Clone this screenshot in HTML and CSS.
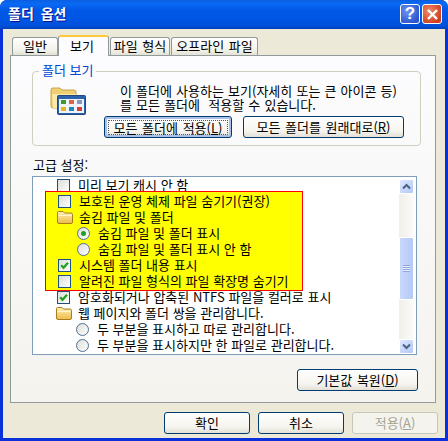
FILE: index.html
```html
<!DOCTYPE html>
<html lang="ko">
<head>
  <meta charset="UTF-8">
  <title>폴더 옵션</title>
  <link rel="stylesheet" href="styles.css">
</head>
<body>
  <svg class="sprites" width="0" height="0">
    <defs>
      <linearGradient id="folder-fill" x1="0" y1="0" x2="0" y2="1">
        <stop offset="0" stop-color="#fdf0b8"/>
        <stop offset="1" stop-color="#eebb48"/>
      </linearGradient>
    </defs>
    <symbol id="folder" viewBox="0 0 16 14">
      <path d="M.5 12V2.500q0-1 1-1h4.500l1.500 1.500h6.500q1.500 0 1.500 1.500V12q0 1.500-1.500 1.500H2q-1.500 0-1.500-1.500z" fill="url(#folder-fill)" stroke="#a87b1c"/>
      <path d="M1.500 5.500h13" stroke="#fff6d2"/>
    </symbol>
    <symbol id="check" viewBox="0 0 13 13">
      <path d="M3.200 6.200l2.300 2.500 4.500-4.900" fill="none" stroke="#21a121" stroke-width="2.300"/>
    </symbol>
  </svg>

  <div class="window">
    <div class="titlebar">
      <span class="title">폴더 옵션</span>
      <span class="caption-btn help">?</span>
      <span class="caption-btn close">
        <svg width="13" height="13" viewBox="0 0 13 13"><path d="M2 2l9 9M11 2l-9 9" stroke="#fff" stroke-width="2.400"/></svg>
      </span>
    </div>

    <div class="body">
      <div class="tabs">
        <div class="tab tab-first">일반</div>
        <div class="tab active">보기</div>
        <div class="tab tab-types">파일 형식</div>
        <div class="tab tab-offline">오프라인 파일</div>
      </div>

      <div class="panel">
        <fieldset class="group">
          <legend>폴더 보기</legend>
          <div class="group-inner">
            <svg class="big-icon" width="36" height="30" viewBox="0 0 36 30">
              <path d="M1 21V5q0-2 2-2h7l2 2h12q2 0 2 2v16H3q-2 0-2-2z" fill="#f0cf72" stroke="#c8a447"/>
              <path d="M3 23L2 9h24l1 14z" fill="#fbe9a8"/>
              <rect x="7.500" y="10.500" width="28" height="19" rx="1" fill="#2a62ae" stroke="#23487f"/>
              <rect x="9" y="14" width="25" height="14" fill="#eef3fb"/>
              <rect x="11" y="15" width="5" height="4" fill="#3f9a2c"/>
              <rect x="19" y="15" width="5" height="4" fill="#d9683f"/>
              <rect x="27" y="15" width="5" height="4" fill="#8a97c2"/>
              <rect x="11" y="22" width="5" height="4" fill="#e8b420"/>
              <rect x="19" y="22" width="5" height="4" fill="#1f88b8"/>
              <rect x="27" y="22" width="5" height="4" fill="#d9402f"/>
            </svg>
            <div class="group-main">
              <p class="group-text">이 폴더에 사용하는 보기(자세히 또는 큰 아이콘 등)<br>를 모든 폴더에 &nbsp;적용할 수 있습니다.</p>
              <div class="group-buttons">
                <button class="btn btn-focus btn-apply-all"><span>모든 폴더에 적용(<u>L</u>)</span></button>
                <button class="btn btn-reset-all">모든 폴더를 원래대로(<u>R</u>)</button>
              </div>
            </div>
          </div>
        </fieldset>

        <div class="list-label">고급 설정:</div>

        <div class="listbox">
          <div class="rows">
            <div class="row"><span class="box"></span>미리 보기 캐시 안 함</div>
            <div class="highlight">
              <div class="row"><span class="box"></span>보호된 운영 체제 파일 숨기기(권장)</div>
              <div class="row"><svg class="folder"><use href="#folder"/></svg>숨김 파일 및 폴더</div>
              <div class="row sub"><span class="radio on"></span>숨김 파일 및 폴더 표시</div>
              <div class="row sub"><span class="radio"></span>숨김 파일 및 폴더 표시 안 함</div>
              <div class="row"><span class="box"><svg width="13" height="13"><use href="#check"/></svg></span>시스템 폴더 내용 표시</div>
              <div class="row"><span class="box"></span>알려진 파일 형식의 파일 확장명 숨기기</div>
            </div>
            <div class="row"><span class="box"><svg width="13" height="13"><use href="#check"/></svg></span>암호화되거나 압축된 NTFS 파일을 컬러로 표시</div>
            <div class="row"><svg class="folder"><use href="#folder"/></svg>웹 페이지와 폴더 쌍을 관리합니다.</div>
            <div class="row sub"><span class="radio"></span>두 부분을 표시하고 따로 관리합니다.</div>
            <div class="row sub"><span class="radio"></span>두 부분을 표시하지만 한 파일로 관리합니다.</div>
          </div>
          <div class="scrollbar">
            <div class="scroll-btn">
              <svg width="9" height="7" viewBox="0 0 9 7"><path d="M1 5.500l3.500-3.500L8 5.500" fill="none" stroke="#4d6185" stroke-width="2"/></svg>
            </div>
            <div class="scroll-track">
              <div class="scroll-thumb"><span class="grip"></span></div>
            </div>
            <div class="scroll-btn">
              <svg width="9" height="7" viewBox="0 0 9 7"><path d="M1 1.500L4.500 5 8 1.500" fill="none" stroke="#4d6185" stroke-width="2"/></svg>
            </div>
          </div>
        </div>

        <div class="restore-row">
          <button class="btn btn-restore">기본값 복원(<u>D</u>)</button>
        </div>
      </div>

      <div class="footer">
        <button class="btn btn-foot">확인</button>
        <button class="btn btn-foot">취소</button>
        <button class="btn btn-foot disabled" disabled>적용(<u>A</u>)</button>
      </div>
    </div>
  </div>
</body>
</html>
```

FILE: styles.css
```css
* {
  box-sizing: border-box;
}
body {
  margin: 0;
  font-family: "Noto Sans CJK KR", "Liberation Sans", sans-serif;
  font-size: 13px;
  word-spacing: 1px;
  color: #000;
}
.sprites {
  display: block;
}
.window {
  width: 448px;
  height: 441px;
  display: flex;
  flex-direction: column;
  background: #0831d9;
  border-radius: 7px 7px 0 0;
  overflow: hidden;
}

/* title bar */
.titlebar {
  height: 29px;
  flex: none;
  display: flex;
  align-items: center;
  gap: 2px;
  padding: 0 6px 3px 8px;
  background: linear-gradient(#0a5fe0 0, #0a6af5 4px, #0058e6 10px, #0055e5 20px, #0050d8 26px, #0040b8 29px);
}
.title {
  flex: 1;
  color: #fff;
  font-weight: 700;
  font-size: 14px;
  word-spacing: 3px;
  text-shadow: 1px 1px 0 #0f1089;
}
.caption-btn {
  width: 20px;
  height: 20px;
  margin-top: 2px;
  display: flex;
  align-items: center;
  justify-content: center;
  border: 1px solid #fff;
  border-radius: 3px;
}
.help {
  background: radial-gradient(circle at 35% 35%, #6f95ee, #2b56cf 75%);
  color: #fff;
  font: 700 17px "Liberation Sans", sans-serif;
}
.close {
  background: radial-gradient(circle at 35% 35%, #ee8c6c, #d0401d 75%);
}

/* dialog body */
.body {
  flex: 1;
  margin: 0 3px 3px;
  padding: 6px 9px 0 7px;
  background: #ece9d8;
  display: flex;
  flex-direction: column;
}
.tabs {
  height: 20px;
  display: flex;
  align-items: flex-end;
  padding-left: 2px;
  position: relative;
  z-index: 1;
}
.tab {
  height: 18px;
  line-height: 15px;
  text-align: center;
  border: 1px solid #919b9c;
  border-bottom: none;
  border-radius: 3px 3px 0 0;
  background: linear-gradient(#fff, #f3f2ea 70%, #e4e2d5);
}
.tab-first {
  width: 46px;
}
.tab.active {
  width: 51px;
  height: 21px;
  margin-bottom: -1px;
  line-height: 17px;
  background: #fcfcfe;
  border-top: 2px solid #ffc73c;
  padding-right: 3px;
}
.tab-types {
  width: 60px;
  margin-left: 1px;
}
.tab-offline {
  width: 87px;
  margin-left: 1px;
}
.panel {
  height: 348px;
  padding: 0 18px 0 21px;
  border: 1px solid #919b9c;
  background: linear-gradient(#fcfcfe, #f4f3ee);
}

/* folder view group */
.group {
  height: 84px;
  margin: 6px 0 0;
  padding: 0;
  border: 1px solid #d0d0bf;
  border-radius: 4px;
}
.group legend {
  margin-left: 6px;
  padding: 0 3px 2px;
  line-height: 16px;
  word-spacing: 0;
  color: #0046d5;
}
.group-inner {
  display: flex;
  padding: 3px 0 0 17px;
}
.big-icon {
  margin-top: 2px;
  flex: none;
}
.group-main {
  margin-left: 34px;
  margin-top: 1px;
  width: 300px;
}
.group-text {
  margin: 0;
  line-height: 14px;
  word-spacing: 0.5px;
  white-space: nowrap;
}
.group-buttons {
  display: flex;
  margin: 4px 0 0 -16px;
  gap: 11px;
}

/* buttons */
.btn {
  height: 22px;
  padding: 0;
  font: inherit;
  word-spacing: inherit;
  line-height: 18px;
  color: #000;
  border: 1px solid #003c74;
  border-radius: 3px;
  background: linear-gradient(#fff, #f5f4ee 70%, #e3e0d6);
}
.btn-focus {
  box-shadow: inset 0 0 0 2px #a9c1e8;
}
.btn-focus span {
  display: block;
  margin: 3px;
  line-height: 13px;
  border: 1px dotted #555;
}
.btn-apply-all {
  width: 128px;
}
.btn-reset-all {
  width: 161px;
}
.btn-restore {
  width: 121px;
}
.btn-foot {
  width: 86px;
}
.btn.disabled {
  color: #a5a391;
  border-color: #c9c7ba;
  background: #f4f3ee;
}

/* advanced settings list */
.list-label {
  margin-top: 11px;
  line-height: 16px;
  padding-left: 1px;
  word-spacing: 0;
}
.listbox {
  height: 179px;
  margin-top: 3px;
  display: flex;
  border: 1px solid #7f9db9;
  background: #fff;
  padding-right: 2px;
}
.rows {
  flex: 1;
  overflow: hidden;
  word-spacing: 0;
}
.row {
  height: 16px;
  line-height: 16px;
  display: flex;
  align-items: center;
  gap: 8px;
  padding-left: 24px;
  white-space: nowrap;
}
.row.sub {
  padding-left: 43px;
}
.highlight {
  position: relative;
  width: 258px;
  height: 100px;
  margin: -2px 0 -2px 12px;
  padding: 1px;
  border: 1px solid #f00;
  background: #ff0;
}
.highlight .row {
  margin-left: -13px;
}
.box {
  width: 13px;
  height: 13px;
  flex: none;
  border: 1px solid #1c5180;
  background: linear-gradient(135deg, #dcdcd7, #fff);
  display: block;
}
.box svg {
  display: block;
  margin: -1px;
}
.radio {
  width: 13px;
  height: 13px;
  flex: none;
  border: 1px solid #4f6f93;
  border-radius: 50%;
  background: linear-gradient(135deg, #dcdcd7, #fff);
  display: flex;
  align-items: center;
  justify-content: center;
}
.radio.on::after {
  content: "";
  width: 5px;
  height: 5px;
  border-radius: 50%;
  background: #21a121;
}
.folder {
  width: 16px;
  height: 14px;
  flex: none;
  margin: 0 -2px 0 -1px;
}

/* scrollbar */
.scrollbar {
  width: 15px;
  flex: none;
  padding: 2px 0 0;
  display: flex;
  flex-direction: column;
  background: #fff;
}
.scroll-btn {
  height: 15px;
  flex: none;
  display: flex;
  align-items: center;
  justify-content: center;
  border: 1px solid #fff;
  border-radius: 2px;
  background: linear-gradient(135deg, #dde7fe, #b4c8f6);
}
.scroll-track {
  flex: 1;
  padding-top: 43px;
  background: linear-gradient(90deg, #f0efe9, #fbfbf8);
}
.scroll-thumb {
  height: 63px;
  display: flex;
  align-items: center;
  justify-content: center;
  border: 1px solid #fff;
  border-radius: 2px;
  background: linear-gradient(90deg, #c9d8fc, #b5c9f7);
}
.grip {
  width: 7px;
  height: 7px;
  background: repeating-linear-gradient(#8fa6da 0 1px, #e6edfd 1px 2px);
}

.restore-row {
  display: flex;
  justify-content: flex-end;
  margin: 14px -1px 0 0;
}

/* bottom buttons */
.footer {
  display: flex;
  justify-content: flex-end;
  gap: 8px;
  margin: 9px -2px 0 0;
}
```
